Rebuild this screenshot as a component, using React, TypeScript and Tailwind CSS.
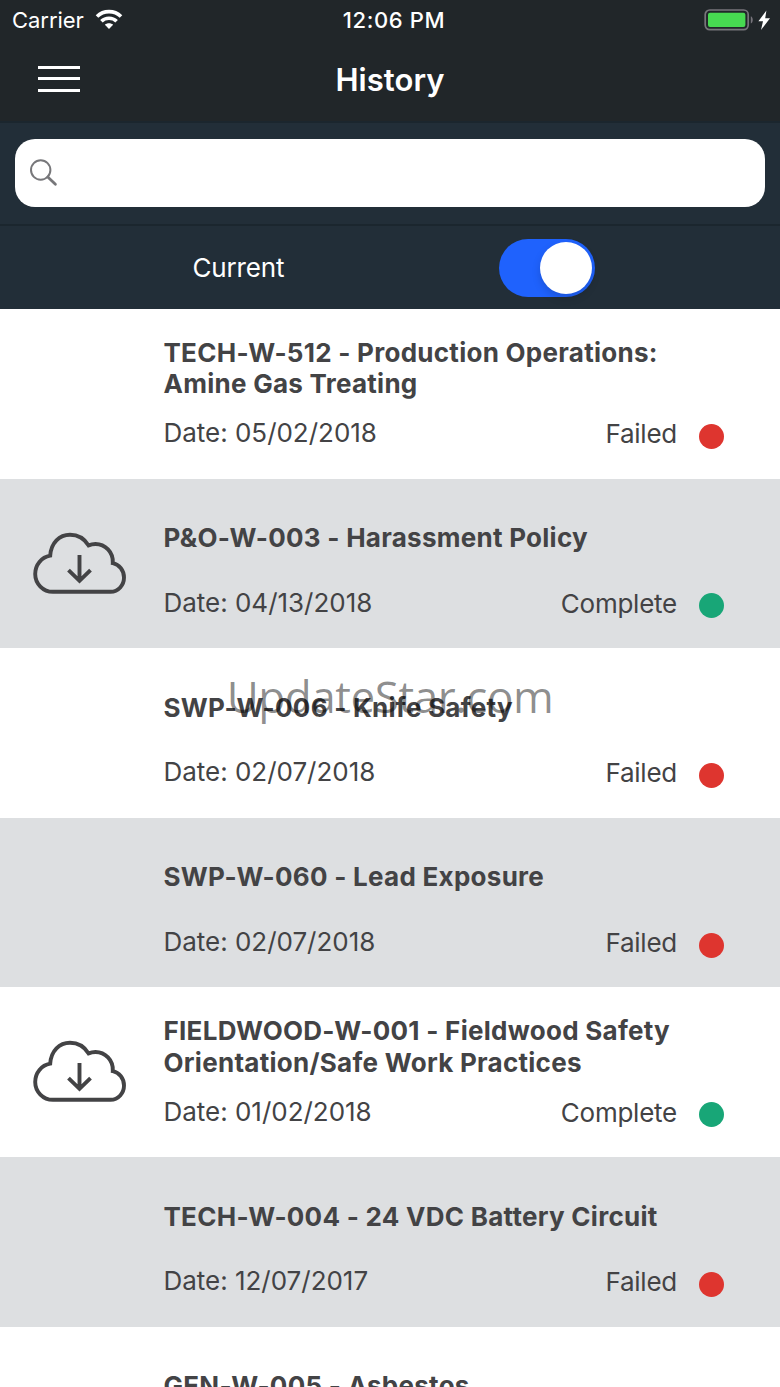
type Status = "Failed" | "Complete";

interface HistoryItem {
  title: string[];
  date: string;
  status: Status;
  downloadable?: boolean;
}

const items: HistoryItem[] = [
  { title: ["TECH-W-512 - Production Operations:", "Amine Gas Treating"], date: "05/02/2018", status: "Failed" },
  { title: ["P&O-W-003 - Harassment Policy"], date: "04/13/2018", status: "Complete", downloadable: true },
  { title: ["SWP-W-006 - Knife Safety"], date: "02/07/2018", status: "Failed" },
  { title: ["SWP-W-060 - Lead Exposure"], date: "02/07/2018", status: "Failed" },
  { title: ["FIELDWOOD-W-001 - Fieldwood Safety", "Orientation/Safe Work Practices"], date: "01/02/2018", status: "Complete", downloadable: true },
  { title: ["TECH-W-004 - 24 VDC Battery Circuit"], date: "12/07/2017", status: "Failed" },
  { title: ["GEN-W-005 - Asbestos"], date: "11/14/2017", status: "Failed" },
];

function WifiIcon() {
  return (
    <svg width="28" height="20" viewBox="0 0 28 20" className="ml-[11px] -mt-0.5" fill="none" stroke="#fff" strokeWidth="3.6">
      <path d="M2 7.6C8.6 1 19.4 1 26 7.6" />
      <path d="M6.4 12.2C10.5 8.2 17.5 8.2 21.6 12.2" />
      <path d="M14 20L9.9 15.8C12 13.8 16 13.8 18.1 15.8Z" fill="#fff" stroke="none" />
    </svg>
  );
}

function BatteryIcon() {
  return (
    <svg width="68" height="22" viewBox="0 0 68 22" className="-mt-px" fill="none">
      <rect x="1.2" y="1" width="43" height="19.6" rx="4.5" stroke="#77747b" strokeWidth="1.7" />
      <rect x="4" y="3.8" width="37.4" height="14.2" rx="2" fill="#47d951" />
      <path d="M46.8 7.2C49.4 8.4 49.4 13.4 46.8 14.6Z" fill="#77747b" />
      <path d="M62.4 1.6L54.4 12.2H59L57 21L66 9.2H61.2Z" fill="#fff" />
    </svg>
  );
}

function CloudDownloadIcon() {
  return (
    <svg width="94" height="64" viewBox="0 0 94 64" fill="none" stroke="#434345" strokeWidth="3.9">
      <path d="M20 59.8H77.5C85.5 59.8 91 53 91 45.5C91 38 86 32.3 79.8 31.1C80.6 20.2 72 12 62.5 12C60 12 57.7 12.5 55.6 13.4C51.5 6.7 44.5 2.7 37 2.7C26.5 2.7 18 10.7 17.2 23.7C8.5 25.2 2.2 32.7 2.2 42C2.2 51.7 10 59.8 20 59.8Z" />
      <path d="M46.5 23V49.5M35.5 38.1L46.5 48.8L57.5 38.1" />
    </svg>
  );
}

function StatusBar() {
  return (
    <div className="grid h-10 grid-cols-3 items-center pr-2 pl-3 text-[22px] leading-10">
      <div className="flex items-center">
        <span className="tracking-[-0.05px]">Carrier</span>
        <WifiIcon />
      </div>
      <span className="pl-1 text-center font-medium tracking-[0.6px]">12:06 PM</span>
      <div className="flex justify-end">
        <BatteryIcon />
      </div>
    </div>
  );
}

function NavBar() {
  return (
    <div className="grid h-[81px] grid-cols-3 items-center">
      <button className="ml-[37.5px] flex w-[42px] flex-col gap-[8.5px] pb-1" aria-label="Menu">
        <span className="h-[3px] w-full bg-white" />
        <span className="h-[3px] w-full bg-white" />
        <span className="h-[3px] w-full bg-white" />
      </button>
      <h1 className="pb-px text-center text-[31px] font-semibold tracking-[0.05px]">History</h1>
    </div>
  );
}

function SearchBar() {
  return (
    <div className="h-[105px] border-t-2 border-b-2 border-[#1b262e] px-[15px] pt-4">
      <div className="flex h-[68px] items-center rounded-[20px] bg-white pb-px pl-[15px]">
        <svg width="28" height="28" viewBox="0 0 28 28" fill="none" stroke="#77777a" strokeLinecap="round">
          <circle cx="10.7" cy="11" r="9.7" strokeWidth="2" />
          <path d="M17.8 18L25.4 25.3" strokeWidth="2.8" />
        </svg>
      </div>
    </div>
  );
}

function CurrentToggle() {
  return (
    <div className="flex h-[83px] items-center justify-between pr-[185px] pl-[192.5px]">
      <span className="text-[26px] tracking-[-0.15px]">Current</span>
      <div className="flex h-[58px] w-24 items-center justify-end rounded-full bg-[#1f62fd] pr-[3px]">
        <div className="size-[52px] rounded-full bg-white shadow-[0_4px_8px_rgba(0,0,0,0.15)]" />
      </div>
    </div>
  );
}

function HistoryRow({ item }: { item: HistoryItem }) {
  return (
    <li className="flex h-[169.6px] shrink-0 odd:bg-white even:bg-[#dddfe1]">
      <div className="w-[163.5px] pt-[53px] pl-[33px]">{item.downloadable && <CloudDownloadIcon />}</div>
      <div className="flex-1 pt-[28.3px] pr-[56.5px]">
        <div className="flex h-[62px] flex-col justify-center text-[26px] leading-[31.4px] font-bold tracking-[0.27px] whitespace-nowrap">
          {item.title.map((line) => (
            <span key={line}>{line}</span>
          ))}
        </div>
        <div className="mt-[18px] flex text-[26px] leading-[31px]">
          <span className="tracking-[-0.02px]">Date: {item.date}</span>
          <span className="mt-px ml-auto tracking-[-0.25px]">{item.status}</span>
          <span
            className={`mt-[6.5px] ml-[21.5px] size-[25px] rounded-full ${item.status === "Failed" ? "bg-[#de352f]" : "bg-[#18a677]"}`}
          />
        </div>
      </div>
    </li>
  );
}

export default function App() {
  return (
    <div className="relative flex h-[1387px] w-[780px] flex-col overflow-hidden bg-white font-['Inter',sans-serif] text-[#434345]">
      <header className="bg-[#212629] text-white">
        <StatusBar />
        <NavBar />
      </header>
      <div className="bg-[#222e38] text-white">
        <SearchBar />
        <CurrentToggle />
      </div>
      <ul className="flex flex-col">
        {items.map((item) => (
          <HistoryRow key={item.title[0]} item={item} />
        ))}
      </ul>
      <div className="pointer-events-none absolute inset-x-0 top-[667px] text-center font-['Open_Sans',sans-serif] text-[44px] leading-[58px] tracking-[-0.45px] text-black/45">
        UpdateStar.com
      </div>
    </div>
  );
}
